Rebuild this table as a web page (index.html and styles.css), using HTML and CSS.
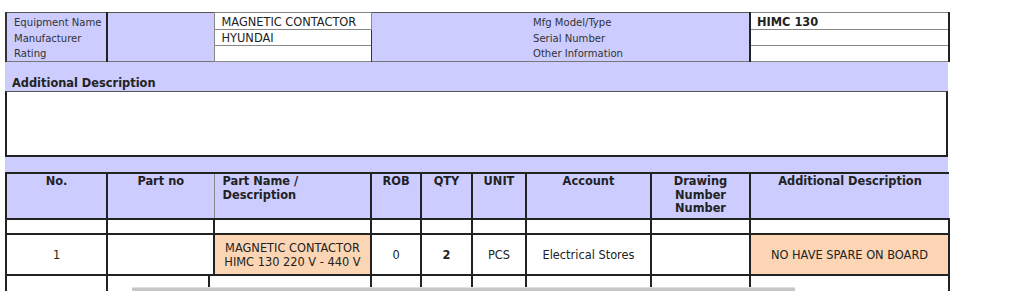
FILE: index.html
```html
<!DOCTYPE html>
<html>
<head>
    <title>Spare Part Requisition</title>
    <link rel="stylesheet" href="styles.css">
</head>
<body>
    <div class="sheet">
        <table class="info">
            <colgroup>
                <col class="w-label">
                <col class="w-gap">
                <col class="w-value">
                <col class="w-gap2">
                <col class="w-label2">
                <col class="w-value2">
            </colgroup>
            <tr class="first">
                <td class="lbl">Equipment Name</td>
                <td class="gap" rowspan="3"></td>
                <td class="val">MAGNETIC CONTACTOR</td>
                <td class="gap2" rowspan="3"></td>
                <td class="lbl">Mfg Model/Type</td>
                <td class="val right"><b>HIMC 130</b></td>
            </tr>
            <tr>
                <td class="lbl">Manufacturer</td>
                <td class="val">HYUNDAI</td>
                <td class="lbl">Serial Number</td>
                <td class="val right"></td>
            </tr>
            <tr>
                <td class="lbl">Rating</td>
                <td class="val"></td>
                <td class="lbl">Other Information</td>
                <td class="val right"></td>
            </tr>
        </table>

        <div class="desc-head">Additional Description</div>
        <div class="desc-box"></div>
        <div class="band"></div>

        <table class="items">
            <colgroup>
                <col class="w-no">
                <col class="w-partno">
                <col class="w-name">
                <col class="w-rob">
                <col class="w-qty">
                <col class="w-unit">
                <col class="w-account">
                <col class="w-drawing">
                <col class="w-addl">
            </colgroup>
            <tr class="head">
                <th>No.</th>
                <th>Part no</th>
                <th class="name">Part Name /<br>Description</th>
                <th>ROB</th>
                <th>QTY</th>
                <th>UNIT</th>
                <th>Account</th>
                <th>Drawing<br>Number<br>Number</th>
                <th class="last">Additional Description</th>
            </tr>
            <tr class="spacer">
                <td></td><td></td><td class="name"></td><td></td><td></td><td></td><td></td><td></td><td></td>
            </tr>
            <tr class="row">
                <td>1</td>
                <td></td>
                <td class="name peach">MAGNETIC CONTACTOR<br>HIMC 130 220 V - 440 V</td>
                <td>0</td>
                <td><b>2</b></td>
                <td>PCS</td>
                <td>Electrical Stores</td>
                <td></td>
                <td class="peach">NO HAVE SPARE ON BOARD</td>
            </tr>
        </table>

        <table class="items more">
            <colgroup>
                <col class="w-no">
                <col class="w-partno2">
                <col class="w-name2">
                <col class="w-rob">
                <col class="w-qty">
                <col class="w-unit">
                <col class="w-account">
                <col class="w-drawing">
                <col class="w-addl">
            </colgroup>
            <tr class="row">
                <td></td><td></td><td class="name"></td><td></td><td></td><td></td><td></td><td></td><td></td>
            </tr>
        </table>
    </div>

    <div class="hscroll"></div>
</body>
</html>
```

FILE: styles.css
```css
body {
    margin: 12px 0 0 5px;
    font-family: "DejaVu Sans", Verdana, sans-serif;
    font-size: 11.4px;
    color: #222;
    background: #fff;
    overflow: hidden;
}
.sheet {
    width: 943px;
}
table {
    border-collapse: collapse;
    table-layout: fixed;
    width: 943px;
}
td, th {
    padding: 0;
    white-space: nowrap;
}

/* header block */
.w-label { width: 101px; }
.w-gap { width: 107px; }
.w-value { width: 157px; }
.w-gap2 { width: 155px; }
.w-label2 { width: 224px; }
.w-value2 { width: 199px; }

.info {
    border-top: 1px solid #555;
    border-bottom: 1px solid #777;
    border-left: 2px solid #333;
}
.info td {
    height: 15px;
    line-height: 14px;
    vertical-align: bottom;
    background: #ccf;
    padding: 0 7px;
}
.info .first td {
    height: 16px;
}
.info .lbl {
    font-family: "DejaVu Sans Condensed", "DejaVu Sans", Tahoma, sans-serif;
    font-stretch: condensed;
    font-size: 11.2px;
    color: #333;
}
.info .gap {
    border-left: 2px solid #222;
}
.info .gap2 {
    border-left: 1px solid #333;
}
.info .val {
    background: #fff;
    border: 1px solid #888;
    padding: 0 7px;
}
.info .val.right {
    border-left: 2px solid #222;
    border-right: 2px solid #222;
    padding-left: 6px;
}

.desc-head {
    height: 14px;
    padding: 15px 7px 0;
    line-height: 13px;
    font-weight: bold;
    background: #ccf;
}
.desc-box {
    height: 63px;
    background: #fff;
    border: 2px solid #222;
    border-top: 1px solid #555;
}
.band {
    height: 15px;
    background: #ccf;
}

/* item list */
.w-no { width: 101px; }
.w-partno { width: 107px; }
.w-name { width: 157px; }
.w-partno2 { width: 102px; }
.w-name2 { width: 162px; }
.w-rob { width: 50px; }
.w-qty { width: 51px; }
.w-unit { width: 54px; }
.w-account { width: 125px; }
.w-drawing { width: 99px; }
.w-addl { width: 199px; }

.items th {
    height: 43px;
    background: #ccf;
    border: 2px solid #222;
    border-right: none;
    vertical-align: top;
    font-weight: bold;
    line-height: 13.5px;
    padding-top: 1px;
    text-align: center;
}
.items th.name {
    text-align: left;
    padding-left: 8px;
    border-left: 1px solid #888;
}
.items th.last {
    border-right: none;
}
.items td {
    border: 2px solid #222;
    text-align: center;
    vertical-align: middle;
    line-height: 14px;
}
.items td.name {
    border-left: 1px solid #888;
}
.items .spacer td {
    height: 13px;
}
.items .row td {
    height: 39px;
}
.items td.peach {
    background: #fcd5b4;
}
.more {
    border-top: none;
}
.more .row td {
    border-top: none;
    height: 30px;
}

/* strip of the horizontal scrollbar along the bottom */
.hscroll {
    position: absolute;
    left: 132px;
    top: 287px;
    width: 663px;
    height: 4px;
    background: #c6c6c6;
    border-top: 1px solid #e0e0e0;
}
```
